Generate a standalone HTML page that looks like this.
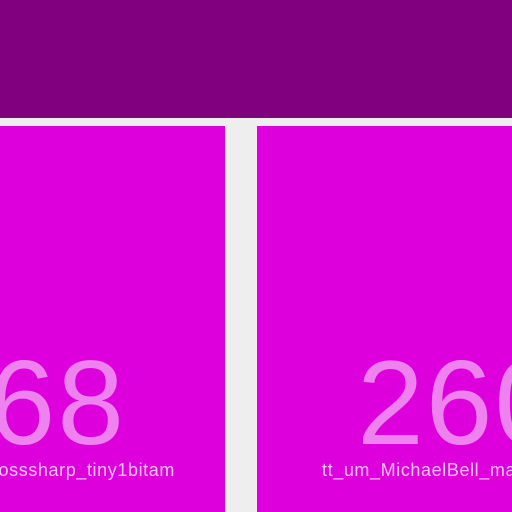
<!DOCTYPE html>
<html><head><style>
html,body{margin:0;padding:0;}
body{width:512px;height:512px;background:#eeeeee;position:relative;overflow:hidden;font-family:"Liberation Sans",sans-serif;}
.top{position:absolute;left:0;top:0;width:512px;height:118px;background:#800080;}
.p{position:absolute;top:126px;height:386px;background:#dd00dd;overflow:hidden;}
.n{position:absolute;color:#ee82ee;font-size:120px;line-height:1;white-space:nowrap;letter-spacing:2px;}
.l{position:absolute;color:#f4c4f4;font-size:18px;line-height:1;white-space:nowrap;letter-spacing:0.6px;}
</style></head><body>
<div class="top"></div>
<div class="p" style="left:0;width:225px;">
  <div class="n" style="right:99px;top:217px;">68</div>
  <div class="l" style="right:50px;top:335px;">crosssharp_tiny1bitam</div>
</div>
<div class="p" style="left:257px;width:255px;">
  <div class="n" style="left:100px;top:217px;">260</div>
  <div class="l" style="left:65px;top:335px;">tt_um_MichaelBell_mandel</div>
</div>
</body></html>
